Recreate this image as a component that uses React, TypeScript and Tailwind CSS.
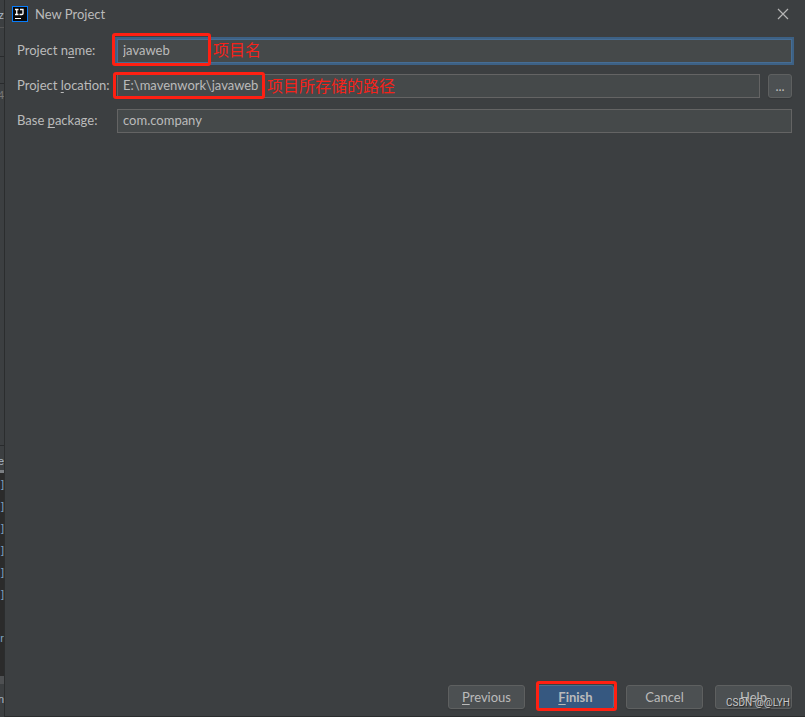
import React from "react";
import type { ReactNode } from "react";

const font = "font-['Lato','Noto_Sans_CJK_SC',sans-serif]";
const field =
  "h-6 min-w-0 flex-1 border bg-[#45494a] px-[5px] pb-[2px] text-[13px] leading-4 text-[#bbbbbb] outline-none";
const plainField = `${field} border-[#646464]`;
const focusedField = `${field} border-[#466d94] ring-2 ring-[#3d6185]`;
const label = "w-[100px] shrink-0 whitespace-nowrap pb-[2px]";
const button =
  "h-6 rounded-[3px] border border-[#5e6060] bg-[#4c5052] text-[13px] leading-4 text-[#bbbbbb] shadow-[0_1px_1px_#35383a]";

function Key({ children }: { children: ReactNode }) {
  return <span className="underline decoration-1 underline-offset-2">{children}</span>;
}

function Mark({ className, children }: { className: string; children?: ReactNode }) {
  return (
    <div className={`pointer-events-none absolute rounded-[3px] border-[3px] border-[#ff2012] ${className}`}>
      {children && (
        <span className="absolute bottom-1/2 left-full ml-[5px] translate-y-1/2 whitespace-nowrap pb-[2px] font-['Noto_Sans_CJK_SC',sans-serif] text-[16px] leading-5 text-[#f5221a]">
          {children}
        </span>
      )}
    </div>
  );
}

function EditorEdge() {
  return (
    <div
      aria-hidden="true"
      className="flex w-[5px] shrink-0 flex-col overflow-hidden border-r border-[#2b2d2e] bg-[#3c3f41] font-['Liberation_Sans',sans-serif] text-[11px] leading-[22px] text-[#a9b7c6]"
    >
      <div className="flex h-7 justify-end border-b border-[#555555] pt-1">vz</div>
      <div className="h-[29px] border-b border-[#292b2d]" />
      <div className="h-[27px] border-b border-[#292b2d]" />
      <div className="flex h-[362px] justify-end border-b border-[#292b2d] text-[#777777]">4</div>
      <div className="flex h-6 justify-end pt-1">ve</div>
      <div className="h-[3px] bg-[#7b7f83]" />
      <div className="flex h-[203px] flex-col items-end bg-[#2b2b2b] text-[#7fa3c4]">
        {[0, 1, 2, 3, 4, 5].map((n) => (
          <span key={n}>]</span>
        ))}
        <span className="pt-[22px]">r</span>
      </div>
      <div className="h-2 bg-[#4e5052]" />
      <div className="flex flex-1 justify-end pt-1">n</div>
    </div>
  );
}

export default function App() {
  return (
    <div className={`flex min-h-screen bg-[#3c3f41] text-[13px] leading-4 text-[#bbbbbb] ${font}`}>
      <EditorEdge />
      <main className="flex min-w-0 flex-1 flex-col border-b border-[#2b2d2e]">
        <header className="flex h-7 items-center pl-[7px] pr-[14px]">
          <svg className="h-4 w-4" viewBox="0 0 16 16" aria-hidden="true">
            <rect width="16" height="16" fill="#087cfa" />
            <rect x="1" y="1" width="14" height="14" fill="#080808" />
            <path d="M3 3.500h3.500M4.750 3.500v5M3 8.500h3.500M8 3.500h3v4q0 1-1.200 1H7.500" fill="none" stroke="#fff" strokeWidth="1.300" />
            <path d="M3 12.500h6" stroke="#fff" />
          </svg>
          <h1 className="ml-[7px] flex-1">New Project</h1>
          <button type="button" aria-label="Close" className="flex h-4 w-4 items-center justify-center">
            <svg className="h-3 w-3" viewBox="0 0 12 12" aria-hidden="true">
              <path d="M1 1l10 10M11 1L1 11" stroke="#b4b4b4" strokeWidth="1.200" />
            </svg>
          </button>
        </header>

        <form className="flex flex-1 flex-col pb-[7px] pl-3 pr-[13px] pt-[11px]">
          <div className="flex flex-col gap-[11px]">
            <div className="relative flex items-center">
              <label htmlFor="name" className={label}>
                Project n<Key>a</Key>me:
              </label>
              <input id="name" defaultValue="javaweb" className={focusedField} />
              <Mark className="-bottom-[3px] -top-[6px] left-[95px] w-[99px]">项目名</Mark>
            </div>
            <div className="relative flex items-center">
              <label htmlFor="location" className={label}>
                Project <Key>l</Key>ocation:
              </label>
              <input id="location" defaultValue="E:\mavenwork\javaweb" className={plainField} />
              <button type="button" aria-label="Browse" className={`${button} ml-2 w-6`}>
                ...
              </button>
              <Mark className="-bottom-px -top-[2px] left-24 w-[152px]">项目所存储的路径</Mark>
            </div>
            <div className="flex items-center">
              <label htmlFor="package" className={label}>
                Base <Key>p</Key>ackage:
              </label>
              <input id="package" defaultValue="com.company" className={plainField} />
            </div>
          </div>

          <div className="mt-auto flex justify-end gap-3">
            <button type="button" className={`${button} w-[77px]`}>
              <Key>P</Key>revious
            </button>
            <div className="relative flex">
              <button
                type="submit"
                className="h-6 w-[77px] rounded-[3px] border border-[#4c708c] bg-[#365880] text-[13px] font-bold leading-4 text-[#bbbbbb]"
              >
                <Key>F</Key>inish
              </button>
              <Mark className="-bottom-[2px] -left-px -right-[3px] -top-1" />
            </div>
            <button type="button" className={`${button} w-[77px]`}>
              Cancel
            </button>
            <div className="relative flex">
              <button type="button" className={`${button} w-[77px]`}>
                Help
              </button>
              <span className="pointer-events-none absolute bottom-0 right-[2px] whitespace-nowrap font-['Roboto',sans-serif] text-[10px] leading-3 text-[#c8c8c8] [text-shadow:1px_1px_1px_#222]">
                CSDN @@LYH
              </span>
            </div>
          </div>
        </form>
      </main>
    </div>
  );
}
